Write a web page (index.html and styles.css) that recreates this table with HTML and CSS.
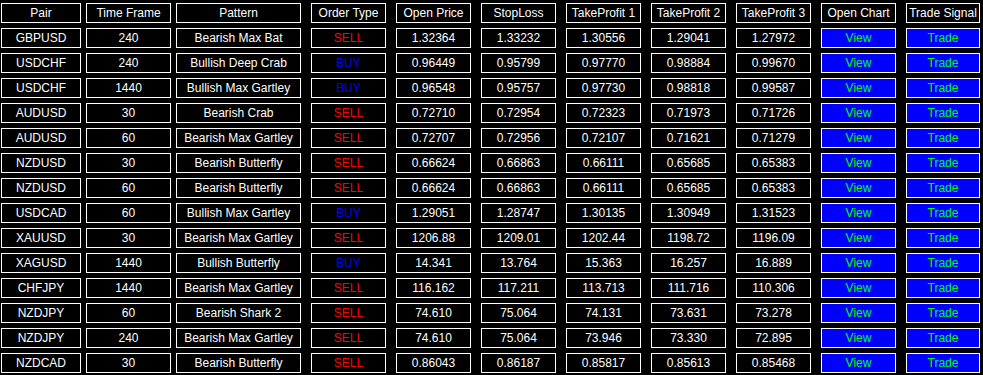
FILE: index.html
```html
<!DOCTYPE html>
<html>
<head>
<meta charset="utf-8">
<link rel="stylesheet" href="styles.css">
</head>
<body>
<div class="table">
  <div class="row">
    <div class="cell c-pair">Pair</div><div class="cell c-tf">Time Frame</div><div class="cell c-pat">Pattern</div><div class="cell">Order Type</div><div class="cell">Open Price</div><div class="cell">StopLoss</div><div class="cell">TakeProfit 1</div><div class="cell">TakeProfit 2</div><div class="cell">TakeProfit 3</div><div class="cell">Open Chart</div><div class="cell c-last">Trade Signal</div>
  </div>
  <div class="row">
    <div class="cell c-pair">GBPUSD</div><div class="cell c-tf">240</div><div class="cell c-pat">Bearish Max Bat</div><div class="cell sell">SELL</div><div class="cell">1.32364</div><div class="cell">1.33232</div><div class="cell">1.30556</div><div class="cell">1.29041</div><div class="cell">1.27972</div><div class="cell btn">View</div><div class="cell btn c-last">Trade</div>
  </div>
  <div class="row">
    <div class="cell c-pair">USDCHF</div><div class="cell c-tf">240</div><div class="cell c-pat">Bullish Deep Crab</div><div class="cell buy">BUY</div><div class="cell">0.96449</div><div class="cell">0.95799</div><div class="cell">0.97770</div><div class="cell">0.98884</div><div class="cell">0.99670</div><div class="cell btn">View</div><div class="cell btn c-last">Trade</div>
  </div>
  <div class="row">
    <div class="cell c-pair">USDCHF</div><div class="cell c-tf">1440</div><div class="cell c-pat">Bullish Max Gartley</div><div class="cell buy">BUY</div><div class="cell">0.96548</div><div class="cell">0.95757</div><div class="cell">0.97730</div><div class="cell">0.98818</div><div class="cell">0.99587</div><div class="cell btn">View</div><div class="cell btn c-last">Trade</div>
  </div>
  <div class="row">
    <div class="cell c-pair">AUDUSD</div><div class="cell c-tf">30</div><div class="cell c-pat">Bearish Crab</div><div class="cell sell">SELL</div><div class="cell">0.72710</div><div class="cell">0.72954</div><div class="cell">0.72323</div><div class="cell">0.71973</div><div class="cell">0.71726</div><div class="cell btn">View</div><div class="cell btn c-last">Trade</div>
  </div>
  <div class="row">
    <div class="cell c-pair">AUDUSD</div><div class="cell c-tf">60</div><div class="cell c-pat">Bearish Max Gartley</div><div class="cell sell">SELL</div><div class="cell">0.72707</div><div class="cell">0.72956</div><div class="cell">0.72107</div><div class="cell">0.71621</div><div class="cell">0.71279</div><div class="cell btn">View</div><div class="cell btn c-last">Trade</div>
  </div>
  <div class="row">
    <div class="cell c-pair">NZDUSD</div><div class="cell c-tf">30</div><div class="cell c-pat">Bearish Butterfly</div><div class="cell sell">SELL</div><div class="cell">0.66624</div><div class="cell">0.66863</div><div class="cell">0.66111</div><div class="cell">0.65685</div><div class="cell">0.65383</div><div class="cell btn">View</div><div class="cell btn c-last">Trade</div>
  </div>
  <div class="row">
    <div class="cell c-pair">NZDUSD</div><div class="cell c-tf">60</div><div class="cell c-pat">Bearish Butterfly</div><div class="cell sell">SELL</div><div class="cell">0.66624</div><div class="cell">0.66863</div><div class="cell">0.66111</div><div class="cell">0.65685</div><div class="cell">0.65383</div><div class="cell btn">View</div><div class="cell btn c-last">Trade</div>
  </div>
  <div class="row">
    <div class="cell c-pair">USDCAD</div><div class="cell c-tf">60</div><div class="cell c-pat">Bullish Max Gartley</div><div class="cell buy">BUY</div><div class="cell">1.29051</div><div class="cell">1.28747</div><div class="cell">1.30135</div><div class="cell">1.30949</div><div class="cell">1.31523</div><div class="cell btn">View</div><div class="cell btn c-last">Trade</div>
  </div>
  <div class="row">
    <div class="cell c-pair">XAUUSD</div><div class="cell c-tf">30</div><div class="cell c-pat">Bearish Max Gartley</div><div class="cell sell">SELL</div><div class="cell">1206.88</div><div class="cell">1209.01</div><div class="cell">1202.44</div><div class="cell">1198.72</div><div class="cell">1196.09</div><div class="cell btn">View</div><div class="cell btn c-last">Trade</div>
  </div>
  <div class="row">
    <div class="cell c-pair">XAGUSD</div><div class="cell c-tf">1440</div><div class="cell c-pat">Bullish Butterfly</div><div class="cell buy">BUY</div><div class="cell">14.341</div><div class="cell">13.764</div><div class="cell">15.363</div><div class="cell">16.257</div><div class="cell">16.889</div><div class="cell btn">View</div><div class="cell btn c-last">Trade</div>
  </div>
  <div class="row">
    <div class="cell c-pair">CHFJPY</div><div class="cell c-tf">1440</div><div class="cell c-pat">Bearish Max Gartley</div><div class="cell sell">SELL</div><div class="cell">116.162</div><div class="cell">117.211</div><div class="cell">113.713</div><div class="cell">111.716</div><div class="cell">110.306</div><div class="cell btn">View</div><div class="cell btn c-last">Trade</div>
  </div>
  <div class="row">
    <div class="cell c-pair">NZDJPY</div><div class="cell c-tf">60</div><div class="cell c-pat">Bearish Shark 2</div><div class="cell sell">SELL</div><div class="cell">74.610</div><div class="cell">75.064</div><div class="cell">74.131</div><div class="cell">73.631</div><div class="cell">73.278</div><div class="cell btn">View</div><div class="cell btn c-last">Trade</div>
  </div>
  <div class="row">
    <div class="cell c-pair">NZDJPY</div><div class="cell c-tf">240</div><div class="cell c-pat">Bearish Max Gartley</div><div class="cell sell">SELL</div><div class="cell">74.610</div><div class="cell">75.064</div><div class="cell">73.946</div><div class="cell">73.330</div><div class="cell">72.895</div><div class="cell btn">View</div><div class="cell btn c-last">Trade</div>
  </div>
  <div class="row">
    <div class="cell c-pair">NZDCAD</div><div class="cell c-tf">30</div><div class="cell c-pat">Bearish Butterfly</div><div class="cell sell">SELL</div><div class="cell">0.86043</div><div class="cell">0.86187</div><div class="cell">0.85817</div><div class="cell">0.85613</div><div class="cell">0.85468</div><div class="cell btn">View</div><div class="cell btn c-last">Trade</div>
  </div>
</div>
</body>
</html>
```

FILE: styles.css
```css
html, body {
  margin: 0;
  padding: 0;
  background: #000;
}

body {
  width: 983px;
  height: 375px;
  overflow: hidden;
  font-family: "Liberation Sans", Arial, sans-serif;
  font-size: 12px;
  color: #fff;
}

.table {
  display: flex;
  flex-direction: column;
  gap: 5px;
  padding: 3px 0 0 1px;
}

.row {
  display: flex;
  gap: 10px;
}

.cell {
  box-sizing: border-box;
  width: 75px;
  height: 20px;
  border: 1px solid #fff;
  line-height: 18px;
  text-align: center;
  white-space: nowrap;
  overflow: hidden;
}

.c-pair {
  width: 80px;
  margin-right: -5px;
}

.c-tf {
  width: 85px;
  margin-right: -5px;
}

.c-pat {
  width: 125px;
}

.c-last {
  width: 74px;
}

.sell {
  color: #ff0000;
}

.buy {
  color: #0000ff;
}

.btn {
  background: #0000ff;
  color: #00ff00;
}
```
